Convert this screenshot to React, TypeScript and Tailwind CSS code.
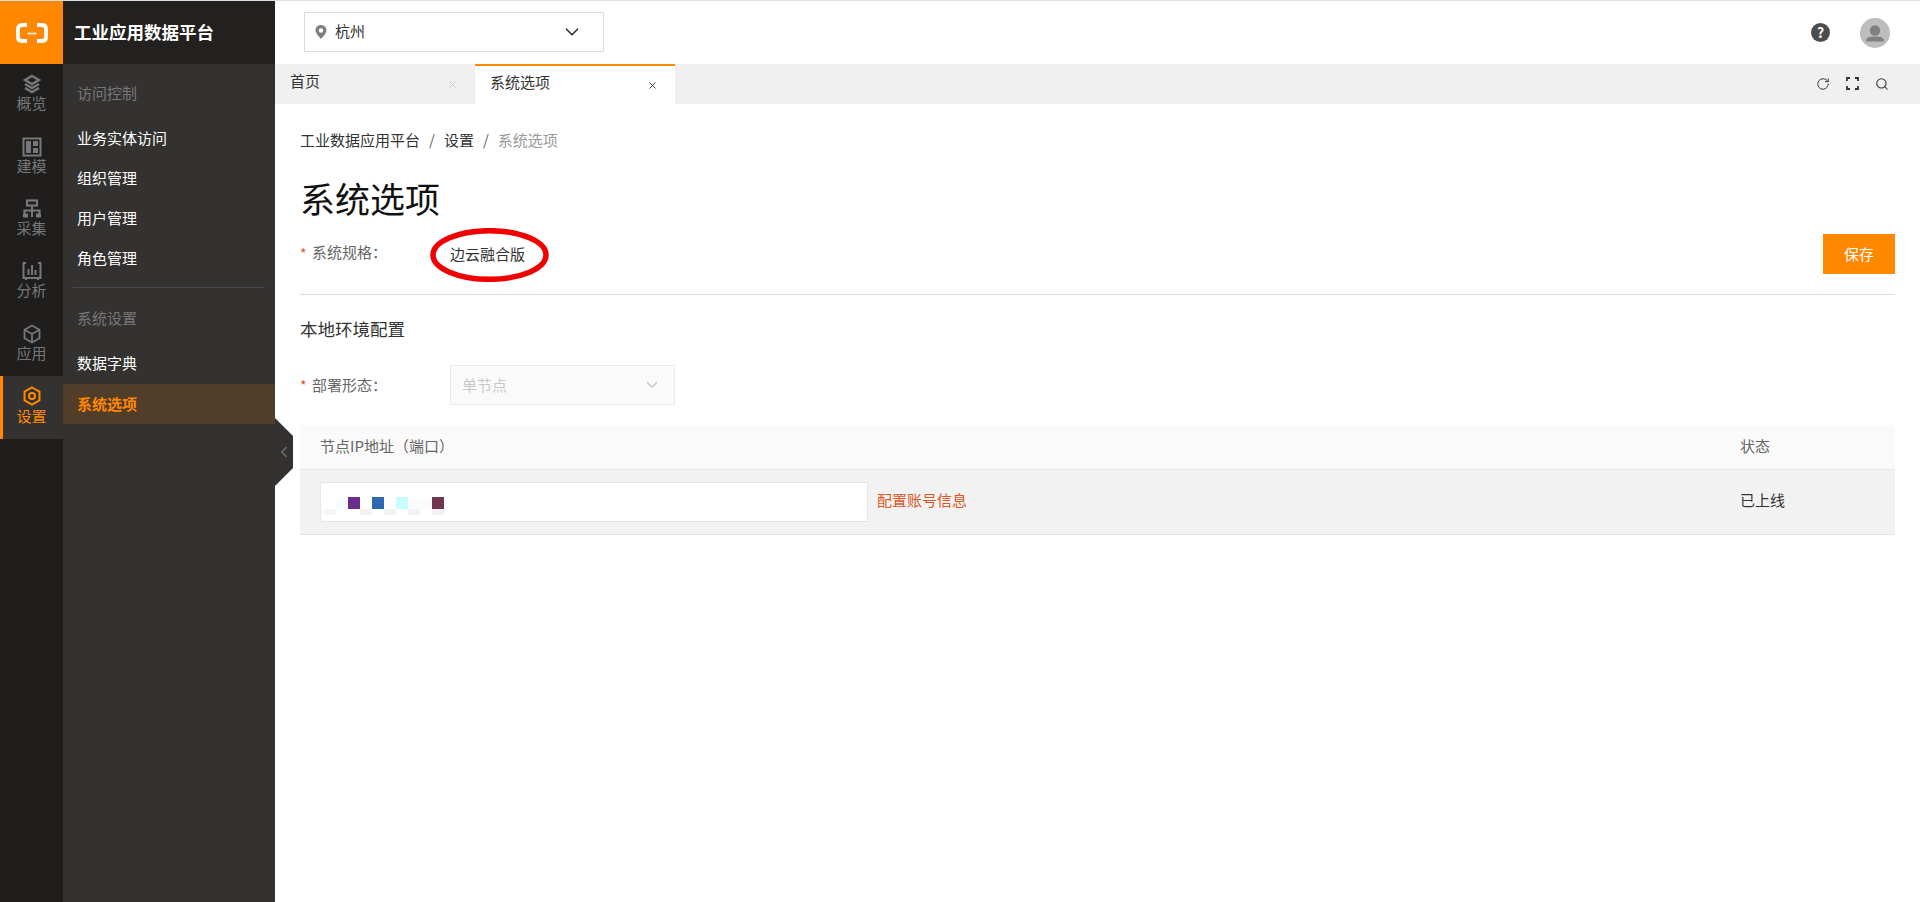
import React from 'react';
import { ChevronDown, ChevronLeft, RotateCw, Search, X } from 'lucide-react';

const railItems = [
  { label: '概览', icon: 'layers' },
  { label: '建模', icon: 'layout' },
  { label: '采集', icon: 'network' },
  { label: '分析', icon: 'chart' },
  { label: '应用', icon: 'box' },
];

function RailIcon({ name }: { name: string }) {
  if (name === 'layers') {
    return (
      <svg width="18" height="20" viewBox="0 0 18 20" fill="none" stroke="#77767a" strokeWidth="2.4">
        <path d="M9 2 L16 6 L9 10 L2 6 Z" />
        <path d="M2 10 L9 14 L16 10" />
        <path d="M2 14 L9 18 L16 14" />
      </svg>
    );
  }
  if (name === 'layout') {
    return (
      <svg width="20" height="20" viewBox="0 0 20 20" fill="none">
        <rect x="1.5" y="1.5" width="17" height="17" stroke="#77767a" strokeWidth="2" />
        <rect x="4" y="4" width="5" height="12" fill="#77767a" />
        <rect x="11" y="4" width="5" height="5" fill="#77767a" />
        <rect x="11" y="11" width="5" height="5" fill="#77767a" />
      </svg>
    );
  }
  if (name === 'network') {
    return (
      <svg width="20" height="20" viewBox="0 0 20 20" fill="none" stroke="#77767a" strokeWidth="2.2">
        <rect x="5" y="1.5" width="10" height="5" />
        <path d="M10 7 V11 M2.5 18 V11.5 H17.5 V18" />
        <rect x="1" y="14.5" width="5" height="4" fill="#77767a" stroke="none" />
        <rect x="14" y="14.5" width="5" height="4" fill="#77767a" stroke="none" />
        <path d="M10 11 V18" />
      </svg>
    );
  }
  if (name === 'chart') {
    return (
      <svg width="20" height="20" viewBox="0 0 20 20" fill="none" stroke="#77767a" strokeWidth="2">
        <path d="M4 2 H1.5 V17 H18.5 V2 H16" />
        <path d="M6.5 14 V8 M10 14 V4 M13.5 14 V9" />
        <path d="M4 17 V19 M16 17 V19" />
      </svg>
    );
  }
  if (name === 'box') {
    return (
      <svg width="18" height="20" viewBox="0 0 18 20" fill="none" stroke="#77767a" strokeWidth="1.8">
        <path d="M9 1.5 L16.5 5.7 V14.3 L9 18.5 L1.5 14.3 V5.7 Z" />
        <path d="M1.5 5.7 L9 10 L16.5 5.7 M9 10 V18.5" />
      </svg>
    );
  }
  return (
    <svg width="18" height="20" viewBox="0 0 18 20" fill="none" stroke="#ff8800" strokeWidth="2">
      <path d="M9 1.5 L16.5 5.7 V14.3 L9 18.5 L1.5 14.3 V5.7 Z" />
      <circle cx="9" cy="10" r="3" />
    </svg>
  );
}

function Rail() {
  return (
    <div className="w-[63px] shrink-0 flex flex-col bg-[#1f1e1c]">
      <div className="h-[63px] bg-[#ff8800] flex items-center justify-center">
        <svg width="32" height="20" viewBox="0 0 32 20" fill="none">
          <path d="M11 2 H6 Q2 2 2 6 V14 Q2 18 6 18 H11" stroke="#fff" strokeWidth="3.8" />
          <path d="M21 2 H26 Q30 2 30 6 V14 Q30 18 26 18 H21" stroke="#fff" strokeWidth="3.8" />
          <path d="M11.5 10.5 H20.5" stroke="#fff" strokeWidth="1.6" />
        </svg>
      </div>
      {railItems.map((item) => (
        <div key={item.label} className="h-[62.4px] flex flex-col items-center justify-center pb-[3px]">
          <RailIcon name={item.icon} />
          <span className="text-[15px] leading-[20px] -mt-px text-[#77767a]">{item.label}</span>
        </div>
      ))}
      <div className="h-[63px] flex flex-col items-center justify-center bg-[#333230] border-l-[3px] border-[#ff8800] pr-[3px] pb-[2px]">
        <RailIcon name="gear" />
        <span className="text-[15px] leading-[20px] text-[#ff8800]">设置</span>
      </div>
    </div>
  );
}

function SubMenu() {
  const itemClass = 'h-10 flex items-center pl-[14px] text-[15px] text-white';
  const titleClass = 'h-10 flex items-center pl-[14px] text-[15px] text-[#77767a]';
  return (
    <div className="w-[212px] shrink-0 flex flex-col bg-[#333230] relative">
      <div className="h-[63px] bg-[#22211f] flex items-center pl-[11px] text-[17.5px] font-bold text-white">
        工业应用数据平台
      </div>
      <div className={`${titleClass} mt-[9px]`}>访问控制</div>
      <div className={`${itemClass} mt-[5px]`}>业务实体访问</div>
      <div className={itemClass}>组织管理</div>
      <div className={itemClass}>用户管理</div>
      <div className={itemClass}>角色管理</div>
      <div className="h-px bg-[#47464a] mx-[10px] mt-[9px]" />
      <div className={`${titleClass} mt-[10px]`}>系统设置</div>
      <div className={`${itemClass} mt-[5px]`}>数据字典</div>
      <div className="h-10 mt-px flex items-center pl-[14px] text-[15px] font-bold text-[#ff8800] bg-[#523d28]">系统选项</div>
      <div className="absolute left-[212px] top-[417px] w-[18px] h-[68px] flex items-center justify-center">
        <svg className="absolute inset-0" width="18" height="68" viewBox="0 0 18 68">
          <path d="M0 0 L18 18 V50 L0 68 Z" fill="#333230" />
        </svg>
        <ChevronLeft className="relative" size={22} color="#77767a" strokeWidth={1.6} />
      </div>
    </div>
  );
}

function TopBar() {
  return (
    <div className="h-[63px] flex items-center justify-between pl-[29px] pr-[30px] bg-white">
      <div className="w-[300px] h-10 -mt-[2px] border border-[#dcdee3] flex items-center pl-[9px] pr-[20px]">
        <svg width="14" height="16" viewBox="0 0 14 16">
          <path fillRule="evenodd" d="M7 1 C3.7 1 1.5 3.4 1.5 6.3 C1.5 9.8 7 15 7 15 C7 15 12.5 9.8 12.5 6.3 C12.5 3.4 10.3 1 7 1 Z M7 4.3 A2.2 2.2 0 1 1 7 8.7 A2.2 2.2 0 1 1 7 4.3 Z" fill="#808080" />
        </svg>
        <span className="ml-[7px] text-[15px] text-[#333]">杭州</span>
        <ChevronDown className="ml-auto" size={22} color="#333" strokeWidth={1.8} />
      </div>
      <div className="flex items-center gap-[30px]">
        <div className="w-[19px] h-[19px] rounded-full bg-[#4d4d4d] flex items-center justify-center text-[14px] font-bold text-white">?</div>
        <div className="w-[30px] h-[30px] rounded-full bg-[#bdbdbd] overflow-hidden">
          <svg width="30" height="30" viewBox="0 0 30 30">
            <circle cx="15" cy="12.5" r="5.2" fill="#808080" />
            <path d="M6 23.5 C6 19 10 18.5 15 18.5 C20 18.5 24 19 24 23.5 Z" fill="#808080" />
          </svg>
        </div>
      </div>
    </div>
  );
}

function Tabs() {
  return (
    <div className="h-10 bg-[#f0f0f0] flex items-stretch">
      <div className="w-[200px] flex items-center justify-between pl-[15px] pr-[17px] text-[15px] text-[#333]">
        <span className="-mt-[5px]">首页</span>
        <X size={11} color="#c4c6cf" strokeWidth={2} />
      </div>
      <div className="w-[200px] bg-white border-t-2 border-[#ff8800] flex items-center justify-between pl-[15px] pr-[17px] text-[15px] text-[#333]">
        <span className="-mt-[6px]">系统选项</span>
        <X size={11} color="#333" strokeWidth={2} />
      </div>
      <div className="ml-auto flex items-center gap-[16px] pr-[31px] pb-[1px]">
        <RotateCw size={14} color="#333" strokeWidth={1.6} />
        <svg width="13" height="13" viewBox="0 0 13 13" fill="none" stroke="#333" strokeWidth="1.8">
          <path d="M1 4 V1 H4 M9 1 H12 V4 M12 9 V12 H9 M4 12 H1 V9" />
        </svg>
        <Search size={14} color="#333" strokeWidth={1.8} />
      </div>
    </div>
  );
}

function Mosaic() {
  const colors = ['#ffffff', '#f8fbff', '#6a2d8c', '#ffffff', '#2f68b2', '#ffffff', '#c8fdff', '#fbfbfb', '#fbfbfb', '#6f3650'];
  const below = ['#f5f5f5', '#ffffff', '#ffffff', '#f3f3f3', '#ffffff', '#f3f3f3', '#ffffff', '#f3f3f3', '#ffffff', '#f3f3f3'];
  return (
    <div className="flex flex-col -ml-px mt-2">
      <div className="flex">
        {colors.map((c, i) => (
          <div key={i} className="w-3 h-3" style={{ backgroundColor: c }} />
        ))}
      </div>
      <div className="flex">
        {below.map((c, i) => (
          <div key={i} className="w-3 h-[6px]" style={{ backgroundColor: c }} />
        ))}
      </div>
    </div>
  );
}

function Content() {
  return (
    <div className="flex-1 bg-white pl-[25px] pr-[25px]">
      <div className="mt-[26px] h-5 flex items-center text-[15px] text-[#333]">
        <span>工业数据应用平台</span>
        <span className="mx-[9px] text-[#666]">/</span>
        <span>设置</span>
        <span className="mx-[9px] text-[#666]">/</span>
        <span className="text-[#999]">系统选项</span>
      </div>
      <h1 className="mt-[23px] text-[35px] leading-[50px] font-normal text-[#111]">系统选项</h1>
      <div className="mt-[11px] h-10 flex items-center relative">
        <span className="w-[12px] text-sm text-[#e8502a] -mt-[3px]">*</span>
        <span className="w-[138px] text-[15px] text-[#666] -mt-[3px]">系统规格：</span>
        <span className="text-[15px] text-[#333]">边云融合版</span>
        <svg className="absolute left-[130px] -top-[6px]" width="120" height="54" viewBox="0 0 120 54" fill="none">
          <ellipse cx="59.5" cy="27" rx="56.5" ry="24.3" stroke="#f00000" strokeWidth="5.5" />
        </svg>
        <button className="ml-auto w-[72px] h-10 bg-[#ff8800] text-[15px] text-white">保存</button>
      </div>
      <div className="mt-5 h-px bg-[#dcdee3]" />
      <h2 className="mt-[22px] text-[17.5px] leading-[24px] font-normal text-[#333]">本地环境配置</h2>
      <div className="mt-[24px] h-10 flex items-center">
        <span className="w-[12px] text-sm text-[#e8502a]">*</span>
        <span className="w-[138px] text-[15px] text-[#666]">部署形态：</span>
        <div className="w-[225px] h-10 bg-[#fafafa] border border-[#ebebeb] flex items-center justify-between pl-[11px] pr-[13px]">
          <span className="text-[15px] text-[#c8c8c8]">单节点</span>
          <ChevronDown size={18} color="#c8c8c8" strokeWidth={2} />
        </div>
      </div>
      <div className="mt-5 h-11 bg-[#fafafa] flex items-center pl-5 pb-[2px] text-[15px] text-[#666]">
        <span className="flex-1">节点IP地址（端口）</span>
        <span className="w-[155px]">状态</span>
      </div>
      <div className="h-[66px] bg-[#f2f2f2] border-y border-[#e6e6e6] flex items-center pl-5 text-[15px]">
        <div className="w-[548px] h-10 bg-white border border-[#e6e6e6] flex items-center pl-[4px]">
          <Mosaic />
        </div>
        <span className="ml-[9px] -mt-[3px] text-[#e0571f]">配置账号信息</span>
        <span className="ml-auto -mt-[3px] w-[155px] text-[#333]">已上线</span>
      </div>
    </div>
  );
}

export default function App() {
  return (
    <div className="h-[902px] flex flex-col overflow-hidden bg-white font-['Noto_Sans_CJK_SC','Liberation_Sans',sans-serif]">
      <div className="h-px bg-[#dcdee3] shrink-0" />
      <div className="flex flex-1">
        <Rail />
        <SubMenu />
        <div className="flex-1 flex flex-col">
          <TopBar />
          <Tabs />
          <Content />
        </div>
      </div>
    </div>
  );
}
